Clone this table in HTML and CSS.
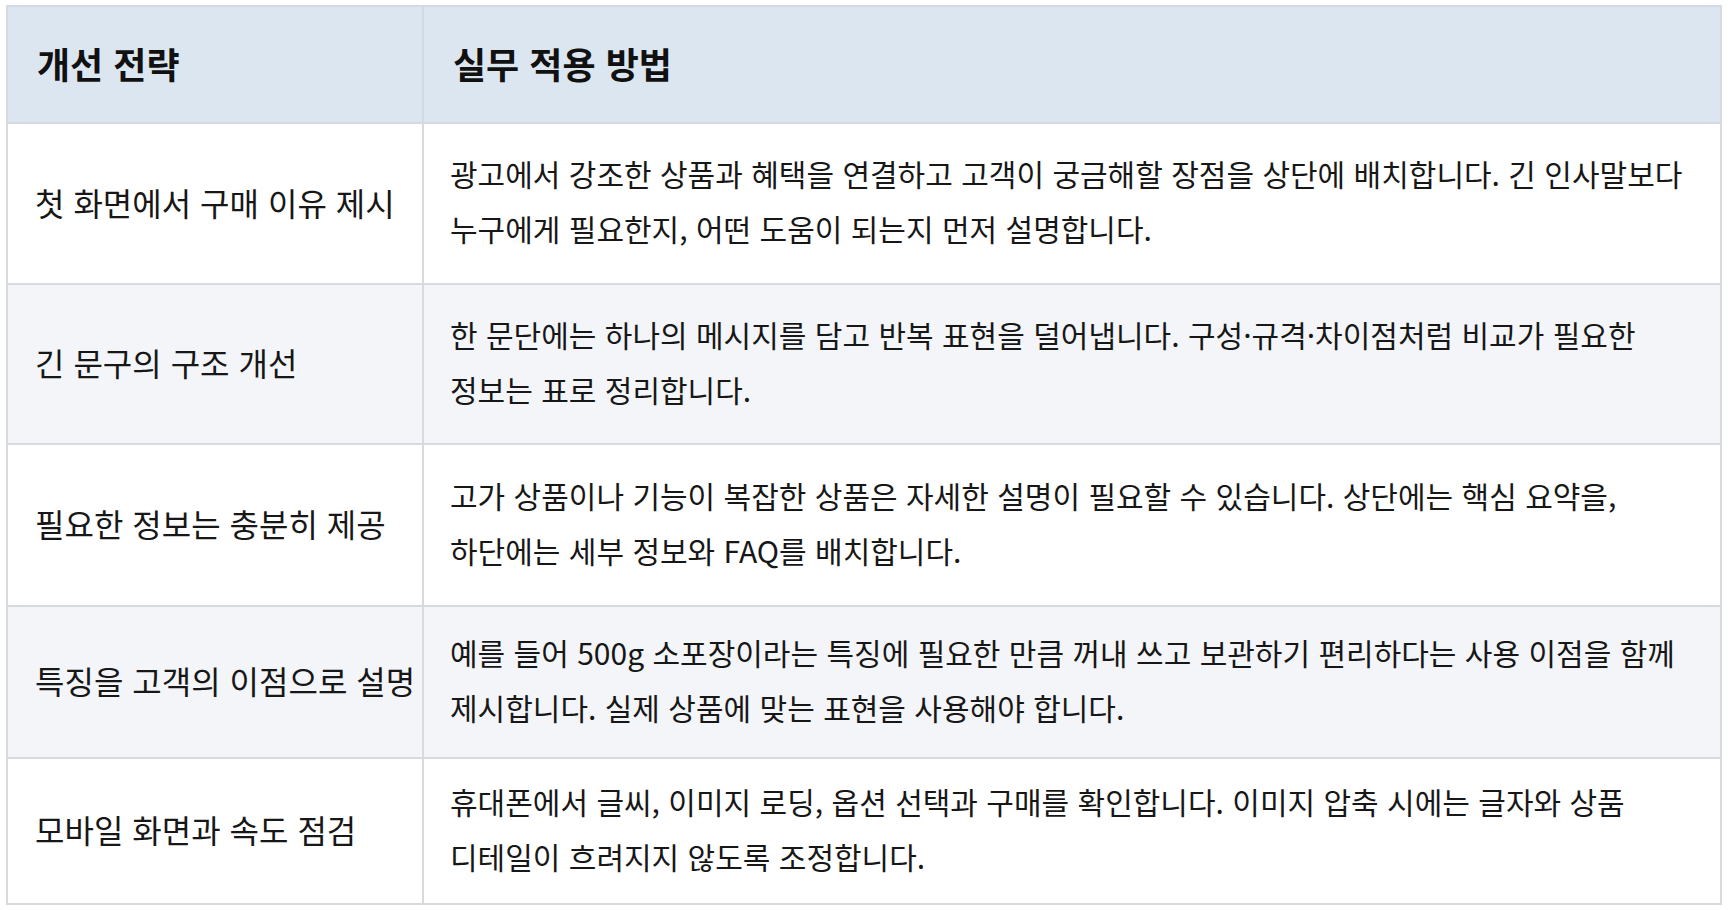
FILE: index.html
```html
<!DOCTYPE html>
<html lang="ko">
<head>
<meta charset="utf-8">
<link rel="stylesheet" href="styles.css">
</head>
<body>
<table class="guide">
  <thead>
    <tr class="head-row">
      <th class="col-strategy">개선 전략</th>
      <th class="col-method">실무 적용 방법</th>
    </tr>
  </thead>
  <tbody>
    <tr class="r1">
      <td class="cell-strategy">첫 화면에서 구매 이유 제시</td>
      <td class="cell-method">광고에서 강조한 상품과 혜택을 연결하고 고객이 궁금해할 장점을 상단에 배치합니다. 긴 인사말보다<br>누구에게 필요한지, 어떤 도움이 되는지 먼저 설명합니다.</td>
    </tr>
    <tr class="r2">
      <td class="cell-strategy">긴 문구의 구조 개선</td>
      <td class="cell-method">한 문단에는 하나의 메시지를 담고 반복 표현을 덜어냅니다. 구성·규격·차이점처럼 비교가 필요한<br>정보는 표로 정리합니다.</td>
    </tr>
    <tr class="r3">
      <td class="cell-strategy">필요한 정보는 충분히 제공</td>
      <td class="cell-method">고가 상품이나 기능이 복잡한 상품은 자세한 설명이 필요할 수 있습니다. 상단에는 핵심 요약을,<br>하단에는 세부 정보와 FAQ를 배치합니다.</td>
    </tr>
    <tr class="r4">
      <td class="cell-strategy">특징을 고객의 이점으로 설명</td>
      <td class="cell-method">예를 들어 500g 소포장이라는 특징에 필요한 만큼 꺼내 쓰고 보관하기 편리하다는 사용 이점을 함께<br>제시합니다. 실제 상품에 맞는 표현을 사용해야 합니다.</td>
    </tr>
    <tr class="r5">
      <td class="cell-strategy">모바일 화면과 속도 점검</td>
      <td class="cell-method">휴대폰에서 글씨, 이미지 로딩, 옵션 선택과 구매를 확인합니다. 이미지 압축 시에는 글자와 상품<br>디테일이 흐려지지 않도록 조정합니다.</td>
    </tr>
  </tbody>
</table>
</body>
</html>
```
FILE: styles.css
```css
html, body {
  background: #ffffff;
}
body {
  margin: 5px 0 0 6px;
  font-family: "Noto Sans CJK KR", "Noto Sans", sans-serif;
  color: #171717;
}
.guide {
  border-collapse: collapse;
  width: 1716px;
  table-layout: fixed;
  border: 2px solid #d6d9dd;
}
.col-strategy {
  width: 416px;
}
.guide th, .guide td {
  border: 2px solid #d6d9dd;
  text-align: left;
  vertical-align: middle;
  box-sizing: border-box;
}
.guide th {
  background: #dce6f0;
  font-size: 36px;
  font-weight: 700;
  color: #111111;
  height: 117px;
  padding: 0 26px 4px 29px;
}
.guide td {
  font-size: 30px;
  line-height: 55px;
  padding: 0 20px 5px 26px;
}
.guide td.cell-strategy {
  font-size: 32px;
  white-space: nowrap;
  padding: 0 0 3px 27px;
}
.r1 td { height: 161px; background: #ffffff; }
.r2 td { height: 160px; background: #f3f5f8; }
.r3 td { height: 162px; background: #ffffff; }
.r4 td { height: 152px; background: #f3f5f8; }
.r5 td { height: 146px; background: #ffffff; }
```
